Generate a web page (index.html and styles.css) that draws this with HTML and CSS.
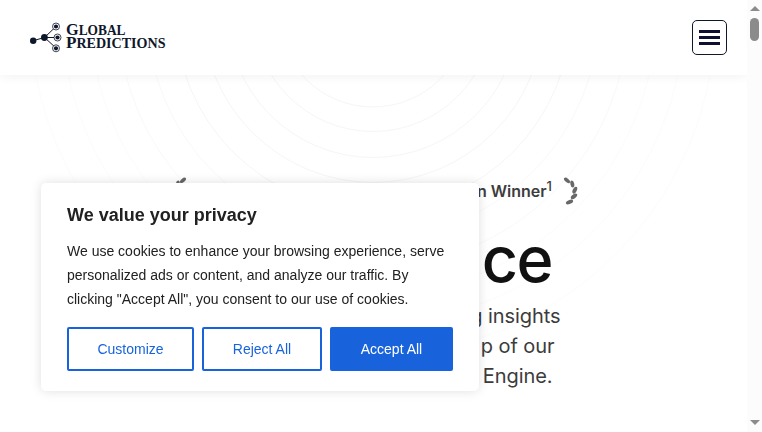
FILE: index.html
```
<!DOCTYPE html>
<html lang="en">
<head>
<meta charset="utf-8">
<title>Global Predictions</title>
<link rel="stylesheet" href="styles.css">
</head>
<body>
<div class="page">
  <header class="header">
    <svg class="logo" width="140" height="36" viewBox="28 20 140 36" role="img" aria-label="Global Predictions">
      <g stroke="#0f172a" stroke-width="1" fill="none">
        <path d="M33 40.7 44.5 37.5M44.5 37.5 56 26.5M44.5 37.5H57.5M44.5 37.5 56 48"/>
        <circle cx="56" cy="26.5" r="3.5" fill="#fff" stroke-width=".8"/>
        <circle cx="57.5" cy="37.5" r="3.5" fill="#fff" stroke-width=".8"/>
        <circle cx="56" cy="48.3" r="3.5" fill="#fff" stroke-width=".8"/>
      </g>
      <g fill="#0f172a">
        <circle cx="33.2" cy="40.7" r="3.2"/><circle cx="44.4" cy="37.5" r="3.4"/>
        <circle cx="56" cy="26.5" r="2.1"/><circle cx="57.5" cy="37.5" r="2.1"/><circle cx="56" cy="48.3" r="2.1"/>
        <text class="wordmark" x="66" y="35" textLength="59.5" lengthAdjust="spacingAndGlyphs"><tspan class="cap">G</tspan>LOBAL</text>
        <text class="wordmark" x="66" y="48" textLength="99.5" lengthAdjust="spacingAndGlyphs"><tspan class="cap">P</tspan>REDICTIONS</text>
      </g>
    </svg>
    <button class="menu" aria-label="Menu"><span></span><span></span><span></span></button>
  </header>
  <main class="hero">
    <svg class="rings" width="747" height="357" viewBox="0 75 747 357" fill="none" stroke="#f6f6f6">
      <circle cx="373" cy="12" r="95"/><circle cx="373" cy="12" r="119.5"/><circle cx="373" cy="12" r="145.5"/>
      <circle cx="373" cy="12" r="170.5"/><circle cx="373" cy="12" r="198"/>
      <g stroke="#f9f9f9"><circle cx="373" cy="12" r="226"/><circle cx="373" cy="12" r="255"/></g>
      <g stroke="#fcfcfc"><circle cx="373" cy="12" r="283"/><circle cx="373" cy="12" r="311"/><circle cx="373" cy="12" r="343"/></g>
    </svg>
    <div class="award">
      <svg class="laurel left" width="16" height="28" viewBox="0 0 16 28"><use href="#branch"/></svg>
      <span class="award-text">n Winner<sup>1</sup></span>
      <svg class="laurel" width="16" height="28" viewBox="0 0 16 28">
        <g id="branch" fill="#686868">
          <ellipse cx="4" cy="3.4" rx="3.6" ry="1.9" transform="rotate(40 4 3.4)"/>
          <ellipse cx="9.3" cy="7" rx="3.6" ry="1.9" transform="rotate(78 9.3 7)"/>
          <ellipse cx="11.8" cy="13.2" rx="3.7" ry="2" transform="rotate(-65 11.8 13.2)"/>
          <ellipse cx="11" cy="19.4" rx="3.7" ry="2" transform="rotate(-38 11 19.4)"/>
          <ellipse cx="6.5" cy="25" rx="3.8" ry="2" transform="rotate(-22 6.5 25)"/>
        </g>
      </svg>
    </div>
    <h1 class="title">ce</h1>
    <p class="lead">g insights<br><span class="second">p of our</span><br><span class="third">Engine.</span></p>
  </main>
</div>
<div class="scrollbar"><i class="up"></i><i class="thumb"></i><i class="down"></i></div>
<section class="consent" role="dialog" aria-labelledby="consent-title">
  <h2 id="consent-title">We value your privacy</h2>
  <p>We use cookies to enhance your browsing experience, serve personalized ads or content, and analyze our traffic. By clicking "Accept All", you consent to our use of cookies.</p>
  <div class="actions">
    <button class="customize">Customize</button>
    <button class="reject">Reject All</button>
    <button class="accept">Accept All</button>
  </div>
</section>
</body>
</html>
```
FILE: styles.css
```
* { box-sizing: border-box; }
body { margin: 0; display: flex; height: 432px; overflow: hidden; background: #fff; }
button { margin: 0; padding: 0; font: inherit; }
.page { width: 747px; height: 432px; overflow: hidden; }
.header {
  position: relative; z-index: 1; height: 75px; padding: 0 20px 0 28px; display: flex;
  align-items: center; justify-content: space-between; background: #fff;
  box-shadow: 0 2px 10px rgba(0, 0, 0, .05);
}
.wordmark { font: bold 14px "Liberation Serif", serif; }
.wordmark .cap { font-size: 17px; }
.menu {
  width: 35px; height: 35px; border: 1px solid #0f172a; border-radius: 5px; background: #fff;
  display: flex; flex-direction: column; align-items: center; justify-content: center; gap: 3.4px;
}
.menu span { width: 21px; height: 3px; background: #0f1030; }
.hero {
  position: relative; height: 357px; padding-top: 101px;
  font-family: Inter, sans-serif; display: flow-root;
}
.rings { position: absolute; left: 0; top: 0; z-index: -1; }
.award { display: flex; justify-content: space-between; width: 408px; margin-left: 171px; height: 30px; }
.award-text { margin-left: auto; margin-right: 11px; font-size: 16px; font-weight: 600; line-height: 30px; color: #3c3c3c; white-space: nowrap; }
.award-text sup { font-size: 13px; line-height: 0; font-weight: 500; }
.laurel { margin-top: 1px; }
.laurel.left { transform: scaleX(-1); }
.title { margin: 15px 195px 0 0; text-align: right; font-size: 63px; line-height: 76px; font-weight: 500; letter-spacing: -1.6px; color: #111; }
.lead { margin: 4px 186.5px 0 0; text-align: right; font-size: 20px; line-height: 30px; color: #3c3c3c; letter-spacing: -.07px; }
.second { margin-right: 6px; }
.third { margin-right: 8px; }
.scrollbar { width: 15px; height: 432px; display: flex; flex-direction: column; align-items: center; background: #fcfcfc; }
.up, .down { width: 0; border: 5px solid transparent; }
.up { margin-top: 6px; border-top: 0; border-bottom-color: #8b8b8b; }
.thumb { width: 9px; height: 23px; margin-top: 7px; border-radius: 5px; background: #8b8b8b; }
.down { margin-top: auto; margin-bottom: 7px; border-bottom: 0; border-top-color: #8b8b8b; }
.consent {
  position: fixed; left: 41px; top: 183px; z-index: 3; width: 438px; height: 208px; padding: 22px 26px;
  border-radius: 5px; background: #fff; color: #212121;
  font: 14px/24px "Liberation Sans", sans-serif; box-shadow: 0 0 11px rgba(0, 0, 0, .13);
}
.consent h2 { margin: 0 0 14px; font-size: 18px; line-height: 20px; }
.consent p { margin: 0 0 16px; }
.actions { display: flex; gap: 8px; }
.actions button { height: 44px; border: 2px solid #1863dc; border-radius: 2px; background: #fff; color: #1863dc; }
.actions .customize { width: 127px; }
.actions .reject { width: 120px; }
.actions .accept { width: 123px; background: #1863dc; color: #fff; }
```
